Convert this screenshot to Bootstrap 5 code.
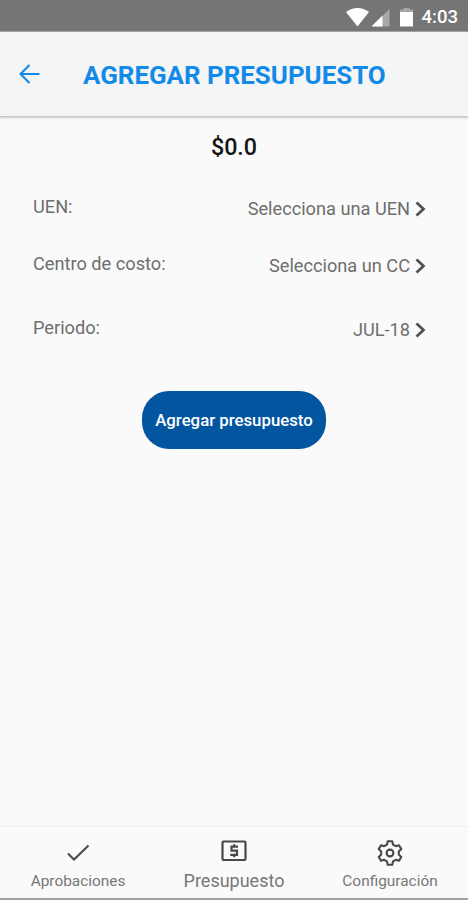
<!DOCTYPE html>
<html lang="es">
<head>
<meta charset="utf-8">
<meta name="viewport" content="width=device-width, initial-scale=1">
<title>Agregar presupuesto</title>
<link href="https://cdn.jsdelivr.net/npm/bootstrap@5.3.0/dist/css/bootstrap.min.css" rel="stylesheet">
<style>
body { font-family: Roboto, "Liberation Sans", sans-serif; background: #fafafa; color: #6e6e6e; height: 900px; overflow: hidden; }
svg { display: block; flex: none; }
.status-strip { height: 32px; background: #757575; color: #fff; padding: 2px 10px 0 0; font-size: 18.5px; font-weight: 500; line-height: 30px; border-bottom: 1px solid #a5a5a5; }
.status-strip span { margin-left: 8px; }
.app-head { height: 85px; background: #f5f5f5; padding-left: 19px; border-bottom: 1px solid #c8c8c8; box-shadow: 0 1px 2px rgba(0,0,0,.2); color: #118aea; }
.app-head h1 { font-size: 25.9px; font-weight: 700; margin: 2px 0 0 43px; line-height: 30px; white-space: nowrap; }
.amount { font-size: 23.3px; font-weight: 500; color: #151515; line-height: 30px; padding-top: 15px; }
.field-row { font-size: 18.2px; line-height: 24px; padding: 0 42px 0 33px; height: 26px; }
.field-row .value { padding-top: 2px; }
.field-row svg { margin-left: 5px; }
.btn-add { width: 184px; height: 58px; border-radius: 27px; background: #02559f; color: #fff; font-size: 16.8px; font-weight: 500; padding: 2px 0 0; margin-top: 49px; white-space: nowrap; }
.btn-add:hover { background: #02498a; color: #fff; }
.tab-strip { height: 74px; border-top: 1px solid #efefef; border-bottom: 2px solid #a3a3a3; }
.tab-strip a { width: 156px; color: #777; text-decoration: none; font-size: 15.4px; line-height: 20px; }
.tab-strip .icon-box { height: 26px; margin-top: 13px; }
.tab-strip a span { margin-top: 5px; white-space: nowrap; }
.tab-strip a.active span { font-size: 18px; }
</style>
</head>
<body class="d-flex flex-column">
<div class="status-strip d-flex align-items-center justify-content-end">
<svg width="68" height="24" viewBox="0 1 68 24"><path fill="#fff" d="M11.500 22.500 0 8Q11.500 0 23 8Z"/><path fill="#a8a8a8" d="M25.500 22.500 43.500 5V22.500Z"/><path fill="#fff" d="M25.500 22.500 36.500 11.500V22.500Z"/><path fill="#a8a8a8" d="M54 8V5.500h3.500V4h6v1.500H67V8Z"/><path fill="#fff" d="M54 8h13v14.500H54Z"/></svg>
<span>4:03</span>
</div>
<header class="app-head d-flex align-items-center">
<svg width="21" height="20" viewBox="0 0 21 20" fill="none" stroke="#118aea" stroke-width="2.100"><path d="M20.500 10H2M10.500 1 1.500 10 10.500 19"/></svg>
<h1>AGREGAR PRESUPUESTO</h1>
</header>
<main class="flex-grow-1 d-flex flex-column">
<div class="amount text-center">$0.0</div>
<div class="field-row d-flex justify-content-between" style="margin-top:33px"><span>UEN:</span><div class="value d-flex align-items-center"><span>Selecciona una UEN</span><svg width="11" height="16" viewBox="0 0 11 16" fill="none" stroke="#505050" stroke-width="2.700"><path d="M1.500 1.500 8.500 8 1.500 14.500"/></svg></div></div>
<div class="field-row d-flex justify-content-between" style="margin-top:31px"><span>Centro de costo:</span><div class="value d-flex align-items-center"><span>Selecciona un CC</span><svg width="11" height="16" viewBox="0 0 11 16" fill="none" stroke="#505050" stroke-width="2.700"><path d="M1.500 1.500 8.500 8 1.500 14.500"/></svg></div></div>
<div class="field-row d-flex justify-content-between" style="margin-top:38px"><span>Periodo:</span><div class="value d-flex align-items-center"><span>JUL-18</span><svg width="11" height="16" viewBox="0 0 11 16" fill="none" stroke="#505050" stroke-width="2.700"><path d="M1.500 1.500 8.500 8 1.500 14.500"/></svg></div></div>
<button type="button" class="btn btn-add border-0 align-self-center">Agregar presupuesto</button>
</main>
<nav class="tab-strip d-flex">
<a href="#" class="d-flex flex-column align-items-center"><div class="icon-box d-flex align-items-center"><svg width="24" height="20" viewBox="0 0 24 20" fill="none" stroke="#484848" stroke-width="2"><path d="M2 10.500 8 16.500 22.500 2.500"/></svg></div><span>Aprobaciones</span></a>
<a href="#" class="active d-flex flex-column align-items-center"><div class="icon-box"><svg width="26" height="22" viewBox="0 0 26 22" fill="none" stroke="#484848" stroke-width="2.200"><rect x="1.500" y="1.500" width="23" height="18.500" rx="1"/><path d="M17 6.700H10.500V10.700H16V14.800H9.200M13.200 4.200V7M13.200 14.500V17.300"/></svg></div><span>Presupuesto</span></a>
<a href="#" class="d-flex flex-column align-items-center"><div class="icon-box"><svg width="26" height="26" viewBox="-13 -13 26 26" fill="none" stroke="#484848" stroke-width="2.100" stroke-linejoin="round"><path d="M-2.300-11.700H2.300L3-8.400 5.800-6.800 9-7.800 11.300-3.900 8.800-1.600V1.600L11.300 3.900 9 7.800 5.800 6.800 3 8.400 2.300 11.700H-2.300L-3 8.400-5.800 6.800-9 7.800-11.300 3.900-8.800 1.600V-1.600L-11.300-3.900-9-7.800-5.800-6.800-3-8.400Z"/><circle r="3.400"/></svg></div><span>Configuración</span></a>
</nav>
<script src="https://cdn.jsdelivr.net/npm/bootstrap@5.3.0/dist/js/bootstrap.bundle.min.js"></script>
</body>
</html>
